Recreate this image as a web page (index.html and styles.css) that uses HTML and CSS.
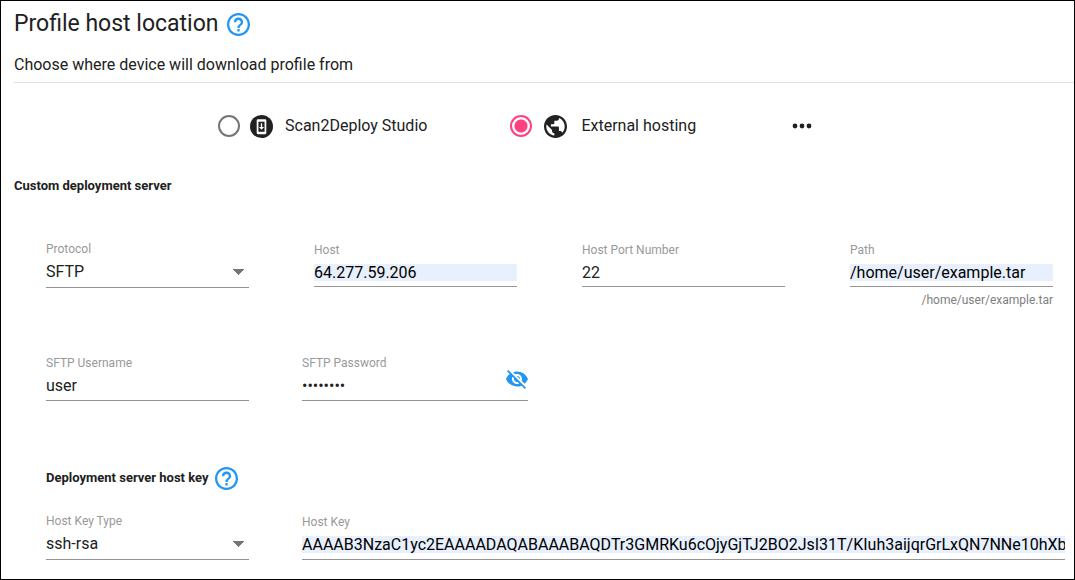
FILE: index.html
```html
<!DOCTYPE html>
<html lang="en">
<head>
<meta charset="utf-8">
<title>Profile host location</title>
<link rel="stylesheet" href="styles.css">
</head>
<body>
<main class="page">
  <header class="header">
    <div class="title-row">
      <h1 class="title">Profile host location</h1>
      <button class="icon-button" type="button" aria-label="Help: profile host location">
        <svg class="help-icon" viewBox="2 2 20 20"><path d="M11 18h2v-2h-2v2zm1-16C6.480 2 2 6.480 2 12s4.480 10 10 10 10-4.480 10-10S17.520 2 12 2zm0 18c-4.410 0-8-3.590-8-8s3.590-8 8-8 8 3.590 8 8-3.590 8-8 8zm0-14c-2.210 0-4 1.790-4 4h2c0-1.100.9-2 2-2s2 .9 2 2c0 2-3 1.750-3 5h2c0-2.250 3-2.500 3-5 0-2.210-1.790-4-4-4z"/></svg>
      </button>
    </div>
    <p class="subtitle">Choose where device will download profile from</p>
  </header>

  <div class="hosting" role="radiogroup" aria-label="Hosting">
    <label class="option">
      <input class="radio" type="radio" name="hosting">
      <svg class="option-icon" viewBox="0 0 24 24"><circle cx="12" cy="12" r="12" fill="#212121"/><rect x="7" y="4.500" width="10" height="15.500" rx="1.200" fill="#fff"/><path fill="#212121" d="M8.800 7h6.400v10.500H8.800z"/><path fill="#fff" d="M11.300 8.500h1.400v4h2L12 15.500l-2.700-3h2z"/></svg>
      <span>Scan2Deploy Studio</span>
    </label>
    <label class="option option-external">
      <input class="radio" type="radio" name="hosting" checked>
      <svg class="option-icon" viewBox="2 2 20 20"><path fill="#212121" d="M12 2C6.480 2 2 6.480 2 12s4.480 10 10 10 10-4.480 10-10S17.520 2 12 2zm-1 17.930c-3.950-.49-7-3.850-7-7.930 0-.62.08-1.210.21-1.790L9 15v1c0 1.100.9 2 2 2v1.930zm6.900-2.540c-.26-.81-1-1.390-1.900-1.390h-1v-3c0-.55-.45-1-1-1H8v-2h2c.55 0 1-.45 1-1V7h2c1.100 0 2-.9 2-2v-.41c2.930 1.190 5 4.060 5 7.410 0 2.080-.8 3.970-2.100 5.390z"/></svg>
      <span>External hosting</span>
    </label>
    <button class="icon-button more" type="button" aria-label="More options">
      <svg class="more-icon" viewBox="0 0 20 6"><circle cx="3" cy="3" r="2.400"/><circle cx="10" cy="3" r="2.400"/><circle cx="17" cy="3" r="2.400"/></svg>
    </button>
  </div>

  <h2 class="section-title">Custom deployment server</h2>

  <form class="form">
    <div class="row row-server">
      <div class="field field-select">
        <label class="label" for="protocol">Protocol</label>
        <select class="select" id="protocol"><option>SFTP</option></select>
      </div>
      <div class="field">
        <label class="label" for="host">Host</label>
        <div class="control"><input class="input filled" id="host" type="text" value="64.277.59.206"></div>
      </div>
      <div class="field">
        <label class="label" for="port">Host Port Number</label>
        <div class="control"><input class="input" id="port" type="text" value="22"></div>
      </div>
      <div class="field">
        <label class="label" for="path">Path</label>
        <div class="control"><input class="input filled" id="path" type="text" value="/home/user/example.tar" aria-describedby="path-hint"></div>
        <p class="hint" id="path-hint">/home/user/example.tar</p>
      </div>
    </div>

    <div class="row row-login">
      <div class="field">
        <label class="label" for="username">SFTP Username</label>
        <div class="control"><input class="input" id="username" type="text" value="user"></div>
      </div>
      <div class="field">
        <label class="label" for="password">SFTP Password</label>
        <div class="control">
          <input class="input" id="password" type="password" value="password">
          <button class="icon-button reveal" type="button" aria-label="Show password">
            <svg class="eye-icon" viewBox="1 2 22 20"><path d="M12 7c2.760 0 5 2.240 5 5 0 .65-.13 1.260-.36 1.830l2.920 2.920c1.510-1.260 2.700-2.890 3.430-4.750-1.730-4.390-6-7.500-11-7.500-1.400 0-2.740.25-3.980.7l2.160 2.160C10.740 7.130 11.350 7 12 7zM2 4.270l2.280 2.280.46.46C3.080 8.300 1.780 10.020 1 12c1.730 4.390 6 7.500 11 7.500 1.550 0 3.030-.3 4.380-.84l.42.42L19.730 22 21 20.730 3.270 3 2 4.270zM7.530 9.800l1.550 1.550c-.05.21-.08.43-.08.65 0 1.660 1.340 3 3 3 .22 0 .44-.03.65-.08l1.550 1.550c-.67.33-1.410.53-2.200.53-2.760 0-5-2.240-5-5 0-.79.2-1.530.53-2.200zm4.310-.78l3.150 3.150.02-.16c0-1.660-1.340-3-3-3l-.17.01z"/></svg>
          </button>
        </div>
      </div>
    </div>

    <div class="key-heading">
      <h3 class="section-subtitle">Deployment server host key</h3>
      <button class="icon-button" type="button" aria-label="Help: host key">
        <svg class="help-icon" viewBox="2 2 20 20"><path d="M11 18h2v-2h-2v2zm1-16C6.480 2 2 6.480 2 12s4.480 10 10 10 10-4.480 10-10S17.520 2 12 2zm0 18c-4.410 0-8-3.590-8-8s3.590-8 8-8 8 3.590 8 8-3.590 8-8 8zm0-14c-2.210 0-4 1.790-4 4h2c0-1.100.9-2 2-2s2 .9 2 2c0 2-3 1.750-3 5h2c0-2.250 3-2.500 3-5 0-2.210-1.790-4-4-4z"/></svg>
      </button>
    </div>

    <div class="row row-key">
      <div class="field field-select">
        <label class="label" for="keytype">Host Key Type</label>
        <select class="select" id="keytype"><option>ssh-rsa</option></select>
      </div>
      <div class="field">
        <label class="label" for="hostkey">Host Key</label>
        <div class="control"><input class="input filled" id="hostkey" type="text" value="AAAAB3NzaC1yc2EAAAADAQABAAABAQDTr3GMRKu6cOjyGjTJ2BO2JsI31T/KIuh3aijqrGrLxQN7NNe10hXb26"></div>
      </div>
    </div>
  </form>
</main>
</body>
</html>
```
FILE: styles.css
```css
* {
  box-sizing: border-box;
}

body {
  margin: 0;
  background: #fff;
  color: #212121;
  font: 400 16px/20px Roboto, "Liberation Sans", sans-serif;
}

h1, h2, h3, p {
  margin: 0;
}

.page {
  min-height: 100vh;
  padding: 9px 0 18px 13px;
  border: 1px solid #000;
}

.header {
  padding-bottom: 7px;
  border-bottom: 1px solid #e0e0e0;
}

.title-row {
  display: flex;
  align-items: center;
  gap: 8px;
  margin-bottom: 17px;
}

.title {
  font-size: 23px;
  font-weight: 400;
  line-height: 28px;
}

.icon-button {
  display: flex;
  padding: 0;
  border: 0;
  background: none;
  cursor: pointer;
}

.help-icon {
  width: 23px;
  height: 23px;
  fill: #2196f3;
}

.hosting {
  display: flex;
  align-items: center;
  gap: 83px;
  margin-top: 31px;
  padding-left: 204px;
}

.option {
  display: flex;
  align-items: center;
  gap: 10px;
  height: 24px;
}

.option-external {
  gap: 12px;
}

.radio {
  appearance: none;
  width: 22px;
  height: 22px;
  margin: 0;
  border: 2px solid #757575;
  border-radius: 50%;
}

.radio:checked {
  border-color: #ff4081;
  background: radial-gradient(circle, #ff4081 6px, transparent 7px);
}

.option-icon {
  width: 23px;
  height: 23px;
  margin-right: 2px;
}

.more {
  margin-left: 13px;
}

.more-icon {
  width: 20px;
  height: 6px;
  fill: #212121;
}

.section-title {
  margin-top: 38px;
}

.section-title,
.section-subtitle {
  font-size: 13px;
  font-weight: 700;
  line-height: 20px;
}

.form {
  margin-top: 45px;
  padding-left: 32px;
}

.row {
  display: grid;
}

.row-server {
  grid-template-columns: repeat(4, minmax(0, 1fr));
  gap: 65px;
  padding-right: 21px;
}

.row-login {
  grid-template-columns: 203px 226px;
  gap: 53px;
  margin-top: 46px;
}

.row-key {
  grid-template-columns: 203px minmax(0, 1fr);
  gap: 53px;
  margin-top: 23px;
  padding-right: 9px;
}

.field {
  padding-top: 1px;
}

.field-select {
  padding-top: 0;
}

.label,
.hint {
  display: block;
  color: #999;
  font-size: 12px;
  line-height: 16px;
}

.hint {
  margin-top: 5px;
  color: #808080;
  text-align: right;
}

.control {
  position: relative;
  margin-top: 6px;
  padding-bottom: 5px;
  border-bottom: 1px solid #949494;
}

.row-login .control,
.row-key .control {
  padding-bottom: 6px;
}

.input {
  display: block;
  width: 100%;
  height: 17px;
  padding: 0;
  border: 0;
  outline: 0;
  background: none;
  color: #212121;
  font: inherit;
}

.filled {
  background: #e8f0fe;
  color: #000;
}

.select {
  appearance: none;
  display: block;
  width: 100%;
  height: 26px;
  margin-top: 5px;
  padding: 0 20px 5px 0;
  border: 0;
  border-bottom: 1px solid #949494;
  border-radius: 0;
  outline: 0;
  background: conic-gradient(from 315deg at 50% 100%, #757575 90deg, transparent 0) right 5px top 7px / 11px 6px no-repeat;
  color: #212121;
  font: inherit;
}

.reveal {
  position: absolute;
  right: 0;
  bottom: 11px;
}

.eye-icon {
  width: 22px;
  height: 20px;
  fill: #2196f3;
}

.key-heading {
  display: flex;
  align-items: center;
  gap: 6px;
  height: 24px;
  margin-top: 65px;
}
```
